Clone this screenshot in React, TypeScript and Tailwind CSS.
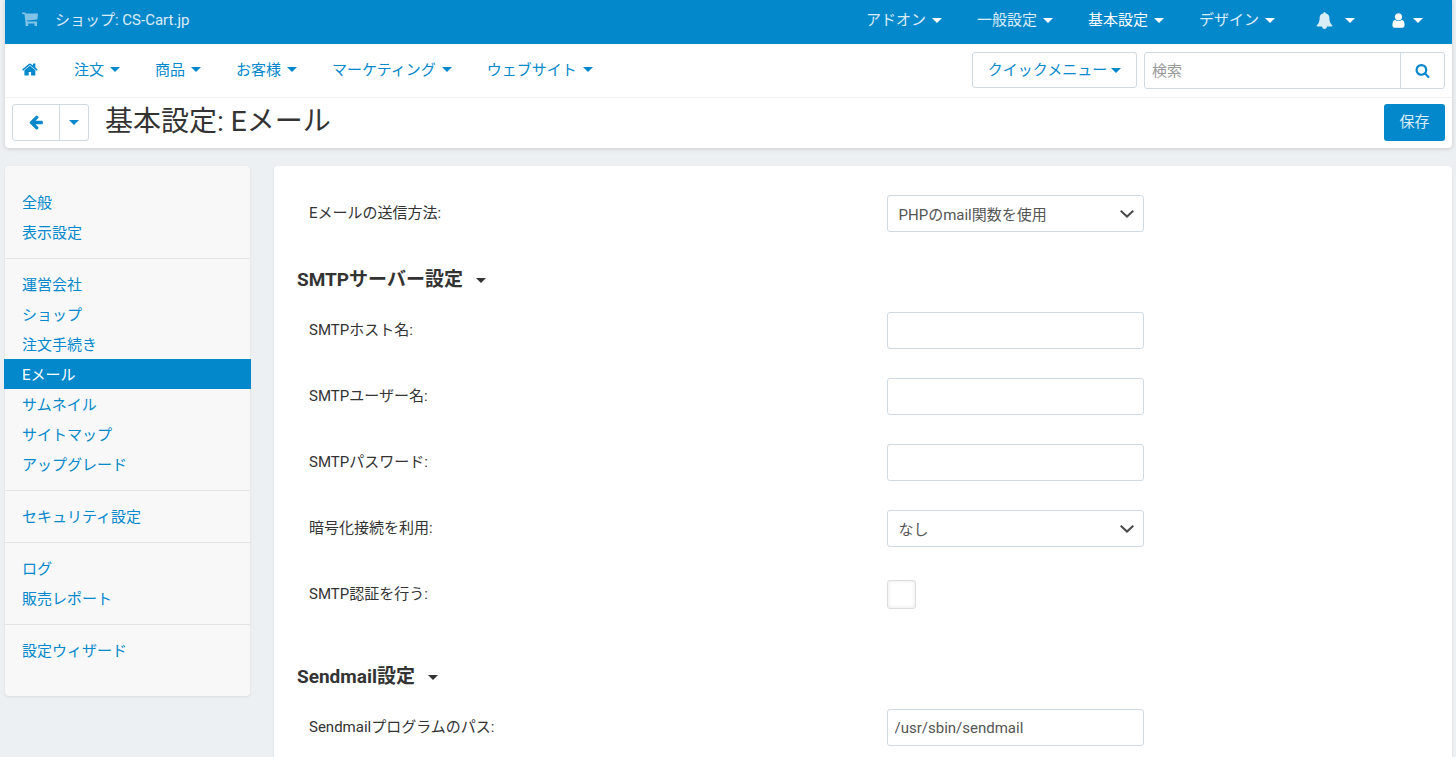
import type { ReactNode } from 'react';
import { useState } from 'react';

const icons = {
  home: 'M1408 992v480q0 26-19 45t-45 19h-384v-384h-256v384h-384q-26 0-45-19t-19-45v-480q0-1 .5-3t.5-3l575-474 575 474q1 2 1 6zm223-69l-62 74q-8 9-21 11h-3q-13 0-21-7l-692-577-692 577q-12 8-24 7-13-2-21-11l-62-74q-8-10-7-23.5t11-21.5l719-599q32-26 76-26t76 26l244 204v-195q0-14 9-23t23-9h192q14 0 23 9t9 23v408l219 182q10 8 11 21.5t-7 23.5z',
  search: 'M1216 832q0-185-131.5-316.5t-316.5-131.5-316.5 131.5-131.5 316.5 131.5 316.5 316.5 131.5 316.5-131.5 131.5-316.5zm512 832q0 52-38 90t-90 38q-54 0-90-38l-343-342q-179 124-399 124-143 0-273.5-55.5t-225-150-150-225-55.5-273.5 55.5-273.5 150-225 225-150 273.5-55.5 273.5 55.5 225 150 150 225 55.5 273.5q0 220-124 399l343 343q37 37 37 90z',
  bell: 'M1728 1408q0 52-38 90t-90 38h-448q0 106-75 181t-181 75-181-75-75-181h-448q-52 0-90-38t-38-90q50-42 91-88t85-119.5 74.5-158.5 50-206 19.5-260q0-152 117-282.5t307-158.5q-8-19-8-39 0-40 28-68t68-28 68 28 28 68q0 20-8 39 190 28 307 158.5t117 282.5q0 139 19.5 260t50 206 74.5 158.5 85 119.5 91 88z',
  user: 'M1536 1399q0 109-62.5 187t-150.5 78h-854q-88 0-150.5-78t-62.5-187q0-85 8.5-160.5t31.5-152 58.5-131 94-89 134.5-34.5q131 128 313 128t313-128q76 0 134.5 34.5t94 89 58.5 131 31.5 152 8.5 160.5zm-256-887q0 159-112.5 271.5t-271.5 112.5-271.5-112.5-112.5-271.5 112.5-271.5 271.5-112.5 271.5 112.5 112.5 271.5z',
  arrowLeft: 'M1664 896v128q0 53-32.5 90.5t-84.5 37.5h-704l293 294q38 36 38 90t-38 90l-75 76q-37 37-90 37-52 0-91-37l-651-652q-37-37-37-90 0-52 37-91l651-650q38-38 91-38 52 0 90 38l75 74q38 38 38 91t-38 91l-293 293h704q52 0 84.5 37.5t32.5 90.5z',
};

const mainMenu = ['注文', '商品', 'お客様', 'マーケティング', 'ウェブサイト'];
const topMenu = ['アドオン', '一般設定', '基本設定', 'デザイン'];

const sidebarGroups = [
  ['全般', '表示設定'],
  ['運営会社', 'ショップ', '注文手続き', 'Eメール', 'サムネイル', 'サイトマップ', 'アップグレード'],
  ['セキュリティ設定'],
  ['ログ', '販売レポート'],
  ['設定ウィザード'],
];

const inputClass = 'block w-[257px] h-[37px] px-[7px] rounded-[3px] border border-[#d0dae3] bg-white text-[#555555] outline-none focus:border-[#0388cc]';

function Icon({ name, size = 16 }: { name: keyof typeof icons; size?: number }) {
  return (
    <svg width={size} height={size} viewBox="0 0 1792 1792" fill="currentColor" className="shrink-0">
      <path d={icons[name]} />
    </svg>
  );
}

function CartIcon() {
  return (
    <svg width="17" height="14" viewBox="0 0 17 14" fill="currentColor" className="shrink-0">
      <path d="M0 0.5h3.4l0.4 1H16L15.4 7.6 5 8.4l0.2 1.2H15V14h-2.5v-2.4H6.2V14H3.6v-3.2L2.4 2H0z" />
    </svg>
  );
}

function Caret() {
  return (
    <svg width="10" height="5" viewBox="0 0 10 5" fill="currentColor" className="shrink-0">
      <path d="M0 0h10L5 5z" />
    </svg>
  );
}

function Field({ id, label, children }: { id: string; label: string; children: ReactNode }) {
  return (
    <div className="grid grid-cols-2 mb-[29px]">
      <label htmlFor={id} className="px-3 pt-2 leading-5">{label}</label>
      <div className="px-3">{children}</div>
    </div>
  );
}

function Select({ id, options }: { id: string; options: string[] }) {
  return (
    <div className="relative w-[257px]">
      <select id={id} className="block w-full h-[37px] pl-[11px] pr-8 pt-[2px] appearance-none rounded-[3px] border border-[#d0dae3] bg-white text-[#555555] outline-none">
        {options.map((o) => <option key={o}>{o}</option>)}
      </select>
      <svg width="14" height="8" viewBox="0 0 14 8" fill="none" stroke="#4a4a4a" strokeWidth="2" className="absolute right-[10px] top-[15px] pointer-events-none">
        <path d="M0.7 0.8L7 6.6l6.3-5.8" />
      </svg>
    </div>
  );
}

function SectionTitle({ children, open, onClick }: { children: ReactNode; open: boolean; onClick: () => void }) {
  return (
    <h4 className="mb-[18px] text-[19px] leading-7 font-bold">
      <button type="button" aria-expanded={open} onClick={onClick} className="flex items-center gap-[13px]">
        {children}
        <Caret />
      </button>
    </h4>
  );
}

export default function App() {
  const [smtpOpen, setSmtpOpen] = useState(true);
  const [sendmailOpen, setSendmailOpen] = useState(true);

  return (
    <div className="min-h-screen flex flex-col pl-[5px] pr-1 bg-[#ecf0f3] text-[15px] leading-5 text-[#333333] font-['Roboto','Noto_Sans_CJK_JP',sans-serif]">
      <header className="bg-white rounded-b-[4px] shadow-[0_1px_4px_rgba(0,0,0,0.15)]">
        <div className="h-11 flex items-center justify-between pl-[17px] pr-[29px] pb-1 bg-[#0388cc] text-white">
          <div className="flex items-center gap-4">
            <a href="#cart" aria-label="カート" className="pb-[2px] opacity-50"><CartIcon /></a>
            <a href="#shop" className="opacity-85">ショップ: CS-Cart.jp</a>
          </div>
          <nav className="flex items-center gap-[35px]">
            {topMenu.map((item) => (
              <button key={item} type="button" className="flex items-center gap-[6px]">
                <span className={item === '基本設定' ? '' : 'opacity-85'}>{item}</span>
                <Caret />
              </button>
            ))}
            <button type="button" aria-label="通知" className="flex items-center gap-3 ml-[6px]">
              <span className="opacity-85"><Icon name="bell" size={17} /></span>
              <Caret />
            </button>
            <button type="button" aria-label="アカウント" className="flex items-center gap-[6px]">
              <Icon name="user" size={17} />
              <Caret />
            </button>
          </nav>
        </div>

        <div className="h-[54px] flex items-center justify-between pl-[17px] pr-[7px] border-b border-[#f2f2f2] text-[#0388cc]">
          <nav className="flex items-center gap-[35px] pb-[2px]">
            <a href="#home" aria-label="ホーム"><Icon name="home" size={17} /></a>
            {mainMenu.map((item) => (
              <button key={item} type="button" className="flex items-center gap-[6px]">
                {item}
                <Caret />
              </button>
            ))}
          </nav>
          <div className="flex items-start gap-[7px]">
            <button type="button" className="h-9 flex items-center justify-center gap-1 w-[165px] rounded-[3px] border border-[#d0dae3]">
              クイックメニュー
              <Caret />
            </button>
            <form className="flex h-[37px] w-[301px] rounded-[3px] border border-[#d0dae3]">
              <input type="text" aria-label="検索" placeholder="検索" className="flex-1 min-w-0 px-[7px] outline-none text-[#555555] placeholder-[#999999]" />
              <button type="submit" aria-label="検索する" className="w-11 flex items-center justify-center border-l border-[#d0dae3]">
                <Icon name="search" size={15} />
              </button>
            </form>
          </div>
        </div>

        <div className="h-[50px] flex items-center px-[7px] pb-[2px]">
          <div className="flex h-[37px] rounded-[3px] border border-[#d0dae3] text-[#0388cc]">
            <button type="button" aria-label="戻る" className="w-[46px] flex items-center justify-center">
              <Icon name="arrowLeft" />
            </button>
            <button type="button" aria-label="履歴" className="w-[29px] flex items-center justify-center border-l border-[#d0dae3]">
              <Caret />
            </button>
          </div>
          <h2 className="ml-4 text-[28px] leading-9 font-normal">基本設定: Eメール</h2>
          <button type="button" className="ml-auto h-[37px] w-[61px] rounded-[3px] bg-[#0388cc] text-white">
            <span className="opacity-85">保存</span>
          </button>
        </div>
      </header>

      <div className="flex-1 flex gap-6 mt-[18px]">
        <aside className="w-[245px] shrink-0 self-start pt-[11px] pb-5 bg-[#f8f8f8] rounded-[4px] shadow-[0_1px_3px_rgba(0,0,0,0.08)]">
          <ul>
            {sidebarGroups.map((group) => (
              <li key={group[0]} className="pt-[10px] pb-[11px] border-b border-[#e2e4e5] last:border-b-0">
                {group.map((item) => (
                  <a
                    key={item}
                    href={`#${item}`}
                    className={item === 'Eメール'
                      ? 'block -mx-px px-[18px] pt-[2px] leading-7 bg-[#0388cc] text-white'
                      : 'block px-[17px] pt-[2px] leading-7 text-[#0388cc] hover:underline'}
                  >
                    {item}
                  </a>
                ))}
              </li>
            ))}
          </ul>
        </aside>

        <main className="flex-1 min-w-0 pt-[29px] pl-[23px] bg-white rounded-t-[4px] shadow-[0_1px_3px_rgba(0,0,0,0.08)]">
          <Field id="mailer" label="Eメールの送信方法:">
            <Select id="mailer" options={['PHPのmail関数を使用', 'SMTPサーバーを使用', 'Sendmailを使用']} />
          </Field>

          <div className="mt-[34px]">
            <SectionTitle open={smtpOpen} onClick={() => setSmtpOpen(!smtpOpen)}>SMTPサーバー設定</SectionTitle>
            {smtpOpen && (
              <>
                <Field id="smtp_host" label="SMTPホスト名:">
                  <input id="smtp_host" type="text" className={inputClass} />
                </Field>
                <Field id="smtp_user" label="SMTPユーザー名:">
                  <input id="smtp_user" type="text" className={inputClass} />
                </Field>
                <Field id="smtp_password" label="SMTPパスワード:">
                  <input id="smtp_password" type="password" className={inputClass} />
                </Field>
                <Field id="smtp_crypt" label="暗号化接続を利用:">
                  <Select id="smtp_crypt" options={['なし', 'TLS', 'SSL']} />
                </Field>
                <Field id="smtp_auth" label="SMTP認証を行う:">
                  <input id="smtp_auth" type="checkbox" className="block my-1 size-[29px] appearance-none rounded-[3px] border border-[#dddddd] bg-white shadow-[inset_0_0_4px_rgba(0,0,0,0.1)] checked:bg-[#0388cc]" />
                </Field>
              </>
            )}
          </div>

          <div className="mt-[50px]">
            <SectionTitle open={sendmailOpen} onClick={() => setSendmailOpen(!sendmailOpen)}>Sendmail設定</SectionTitle>
            {sendmailOpen && (
              <div className="grid grid-cols-2">
                <label htmlFor="sendmail_path" className="px-3 pt-2 leading-5">Sendmailプログラムのパス:</label>
                <div className="px-3">
                  <input id="sendmail_path" type="text" defaultValue="/usr/sbin/sendmail" className={inputClass} />
                </div>
              </div>
            )}
          </div>
        </main>
      </div>
    </div>
  );
}
